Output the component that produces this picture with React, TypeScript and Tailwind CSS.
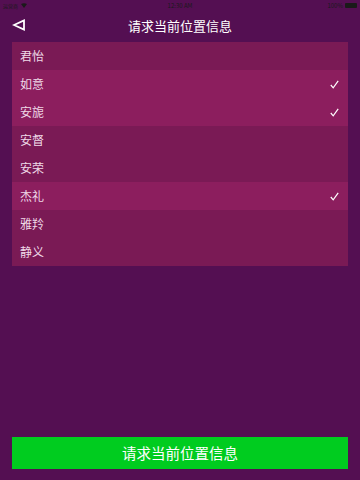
import React from 'react';

interface Item {
  name: string;
  selected: boolean;
}

const items: Item[] = [
  { name: '君怡', selected: false },
  { name: '如意', selected: true },
  { name: '安旎', selected: true },
  { name: '安督', selected: false },
  { name: '安荣', selected: false },
  { name: '杰礼', selected: true },
  { name: '雅羚', selected: false },
  { name: '静义', selected: false },
];

const font = { fontFamily: '"Noto Sans CJK SC", "Liberation Sans", sans-serif' };

const App: React.FC = () => {
  return (
    <div className="flex flex-col w-[360px] h-[480px] bg-[#540f52] text-white" style={font}>
      {/* Status bar */}
      <div className="flex items-center justify-between h-[11px] px-[3px] text-[5px] leading-none text-[#1a1a1a]">
        <div className="flex items-center gap-[3px] w-[60px]">
          <span>运营商</span>
          <svg width="6" height="5" viewBox="0 0 6 5">
            <path d="M0 1 Q3 -0.5 6 1 L3 5 Z" fill="#1a1a1a" />
          </svg>
        </div>
        <span className="text-[6px]">12:30 AM</span>
        <div className="flex items-center justify-end gap-[2px] w-[60px]">
          <span className="text-[6px]">100%</span>
          <div className="w-[12px] h-[5px] bg-[#1a1a1a] rounded-[1px]" />
        </div>
      </div>

      {/* Nav bar */}
      <div className="relative flex items-center justify-center h-[29px]">
        <svg className="absolute left-[12px] top-[7px]" width="14" height="14" viewBox="0 0 14 14">
          <path d="M2 7 L12 2.5 L12 11.5 Z" fill="none" stroke="#fff" strokeWidth="1.8" strokeLinejoin="miter" />
        </svg>
        <span className="text-[13px] font-normal">请求当前位置信息</span>
      </div>

      {/* List */}
      <div className="mx-[12px] mt-[2px] flex flex-col">
        {items.map((item) => (
          <div
            key={item.name}
            className={`flex items-center justify-between h-[28px] pl-[8px] pr-[9px] ${
              item.selected ? 'bg-[#8c1e5e]' : 'bg-[#7a1a55]'
            }`}
          >
            <span className="text-[12px] text-[#efd9e7]">{item.name}</span>
            {item.selected && (
              <svg width="9" height="9" viewBox="0 0 9 9">
                <path d="M0.8 5 L3.2 7.8 L8.2 0.8" fill="none" stroke="#fff" strokeWidth="1.2" />
              </svg>
            )}
          </div>
        ))}
      </div>

      <div className="flex-1" />

      {/* Bottom button */}
      <div className="mx-[12px] mb-[11px] h-[32px] flex items-center justify-center bg-[#00cc1f]">
        <span className="text-[14.5px] font-normal">请求当前位置信息</span>
      </div>
    </div>
  );
};

export default App;
